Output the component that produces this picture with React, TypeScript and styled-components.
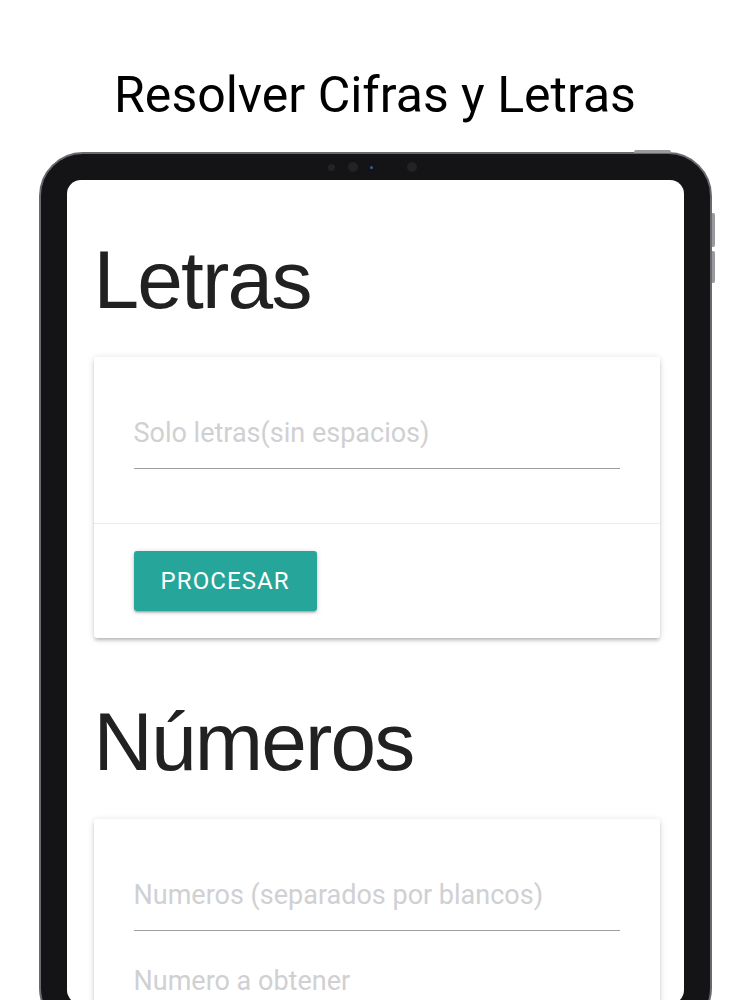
import React from "react";
import styled, { createGlobalStyle } from "styled-components";

const GlobalStyle = createGlobalStyle`
  html, body {
    margin: 0;
    padding: 0;
    background: #ffffff;
  }
  body {
    font-family: Roboto, "Liberation Sans", sans-serif;
    overflow: hidden;
  }
`;

const Page = styled.div`
  width: 750px;
  height: 1000px;
  overflow: hidden;
  display: flex;
  flex-direction: column;
  align-items: center;
`;

const Title = styled.h1`
  margin: 65px 0 27px;
  font-family: Roboto, "Liberation Sans", sans-serif;
  font-size: 50px;
  line-height: 60px;
  font-weight: 400;
  color: #000000;
`;

const Device = styled.div`
  position: relative;
  width: 673px;
  height: 880px;
  box-sizing: border-box;
  padding: 26px;
  border: 2px solid #6a6a6e;
  border-radius: 44px;
  background: #141416;
  flex-shrink: 0;
`;

const TopButton = styled.div`
  position: absolute;
  top: -4px;
  right: 39px;
  width: 37px;
  height: 3px;
  border-radius: 2px 2px 0 0;
  background: #9a9a9e;
`;

const SideButton = styled.div<{ $top: number; $height: number }>`
  position: absolute;
  right: -5px;
  top: ${({ $top }) => $top}px;
  width: 3px;
  height: ${({ $height }) => $height}px;
  border-radius: 0 2px 2px 0;
  background: #9a9a9e;
`;

const Sensors = styled.div`
  position: absolute;
  top: 8px;
  left: 287px;
  display: flex;
  align-items: center;
`;

const Dot = styled.span<{ $size: number; $color?: string; $gap: number }>`
  display: block;
  width: ${({ $size }) => $size}px;
  height: ${({ $size }) => $size}px;
  margin-right: ${({ $gap }) => $gap}px;
  border-radius: 50%;
  background: ${({ $color }) => $color ?? "#232326"};
`;

const Screen = styled.div`
  height: 100%;
  border-radius: 14px;
  background: #ffffff;
  overflow: hidden;
  padding: 50px 24px 0 27px;
  box-sizing: border-box;
`;

const Heading = styled.h2<{ $top: number }>`
  margin: ${({ $top }) => $top}px 0 27px;
  font-family: "Liberation Sans", Arial, sans-serif;
  font-size: 82px;
  line-height: 100px;
  font-weight: 400;
  letter-spacing: -1.8px;
  color: #212121;
`;

const Card = styled.div`
  background: #ffffff;
  border-radius: 3px;
  box-shadow: 0 3px 3px 0 rgba(0, 0, 0, 0.12), 0 4px 2px -3px rgba(0, 0, 0, 0.1),
    0 1px 7px 0 rgba(0, 0, 0, 0.14);
`;

const CardContent = styled.div`
  padding: 40px;
`;

const Field = styled.div`
  padding-top: 19px;
  margin-bottom: 14px;
`;

const Input = styled.input`
  display: block;
  width: 100%;
  height: 53px;
  box-sizing: border-box;
  margin: 0;
  padding: 0 0 18px;
  border: none;
  border-bottom: 1px solid #9e9e9e;
  outline: none;
  background: transparent;
  font-family: Roboto, "Liberation Sans", sans-serif;
  font-size: 27px;
  color: #212121;

  &::placeholder {
    color: #d0d0d3;
  }
`;

const CardAction = styled.div`
  border-top: 1px solid rgba(160, 160, 160, 0.2);
  padding: 27px 40px;
`;

const Button = styled.button`
  height: 60px;
  padding: 0 27px;
  border: none;
  border-radius: 3px;
  background: #26a69a;
  color: #ffffff;
  font-family: Roboto, "Liberation Sans", sans-serif;
  font-size: 24px;
  letter-spacing: 1.1px;
  text-transform: uppercase;
  box-shadow: 0 2px 2px 0 rgba(0, 0, 0, 0.14), 0 3px 1px -2px rgba(0, 0, 0, 0.12),
    0 1px 5px 0 rgba(0, 0, 0, 0.2);
  cursor: pointer;
`;

export default function App() {
  return (
    <>
      <GlobalStyle />
      <Page>
        <Title>Resolver Cifras y Letras</Title>
        <Device>
          <TopButton />
          <SideButton $top={59} $height={34} />
          <SideButton $top={97} $height={32} />
          <Sensors>
            <Dot $size={7} $gap={13} />
            <Dot $size={10} $gap={12} />
            <Dot $size={3} $color="#2d5fa8" $gap={34} />
            <Dot $size={10} $gap={0} />
          </Sensors>
          <Screen>
            <Heading $top={0}>Letras</Heading>
            <Card>
              <CardContent>
                <Field>
                  <Input placeholder="Solo letras(sin espacios)" />
                </Field>
              </CardContent>
              <CardAction>
                <Button>Procesar</Button>
              </CardAction>
            </Card>
            <Heading $top={54}>Números</Heading>
            <Card>
              <CardContent>
                <Field>
                  <Input placeholder="Numeros (separados por blancos)" />
                </Field>
                <Field>
                  <Input placeholder="Numero a obtener" />
                </Field>
              </CardContent>
            </Card>
          </Screen>
        </Device>
      </Page>
    </>
  );
}
